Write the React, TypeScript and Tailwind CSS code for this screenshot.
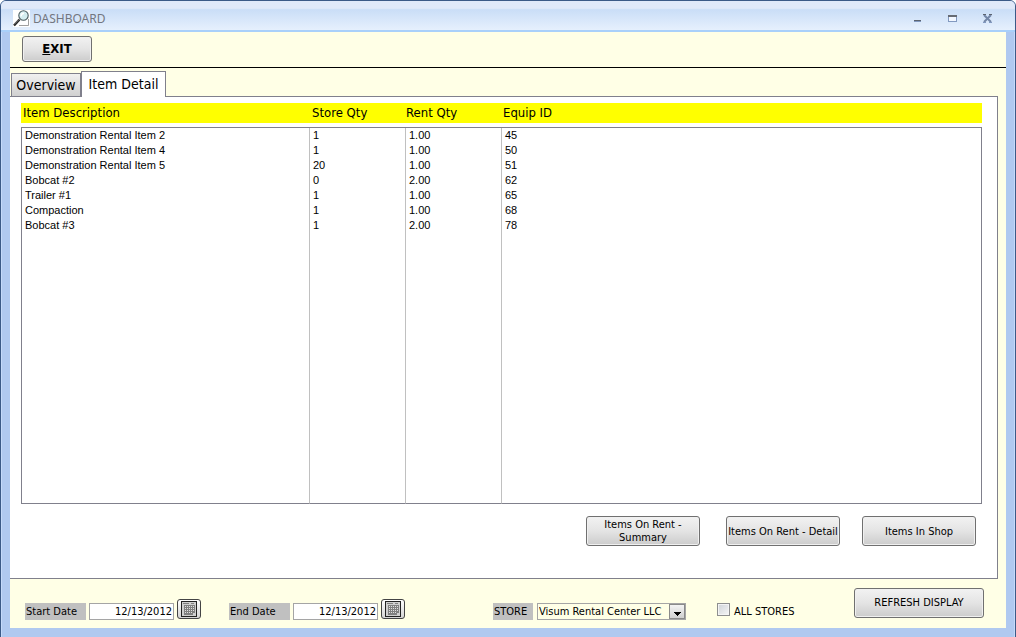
import { useState } from 'react';
import type { ReactNode } from 'react';
import clsx from 'clsx';

const items = [
  { description: 'Demonstration Rental Item 2', storeQty: 1, rentQty: '1.00', equipId: 45 },
  { description: 'Demonstration Rental Item 4', storeQty: 1, rentQty: '1.00', equipId: 50 },
  { description: 'Demonstration Rental Item 5', storeQty: 20, rentQty: '1.00', equipId: 51 },
  { description: 'Bobcat #2', storeQty: 0, rentQty: '2.00', equipId: 62 },
  { description: 'Trailer #1', storeQty: 1, rentQty: '1.00', equipId: 65 },
  { description: 'Compaction', storeQty: 1, rentQty: '1.00', equipId: 68 },
  { description: 'Bobcat #3', storeQty: 1, rentQty: '2.00', equipId: 78 },
];

function PushButton({ className, children }: { className?: string; children: ReactNode }) {
  return (
    <button
      type="button"
      className={clsx(
        'rounded-[3px] border border-[#707070] bg-linear-to-b from-[#f2f2f2] via-[#e4e4e4] via-50% to-[#cccccc] text-center shadow-[inset_0_0_0_1px_#f0f0f0]',
        className
      )}
    >
      {children}
    </button>
  );
}

function MagnifierIcon() {
  return (
    <svg width="17" height="17" viewBox="0 0 17 17" aria-hidden="true">
      <rect width="17" height="17" fill="#fff" />
      <path d="M15.5 9v6.5H6" fill="none" stroke="#888" strokeWidth="0.8" />
      <path d="M1 15.5 6.5 9.5" stroke="#222" strokeWidth="2.4" />
      <path d="M1 14.5 6 9.5" stroke="#aaa" strokeWidth="0.7" />
      <circle cx="10.5" cy="5.5" r="4.7" fill="#d5eef0" stroke="#4c5c60" strokeWidth="1.1" />
      <path d="M8 6.5c0-2 1.2-3.2 3-3.3" fill="none" stroke="#fff" strokeWidth="1.4" />
    </svg>
  );
}

function CalendarIcon() {
  return (
    <svg width="16" height="16" viewBox="0 0 16 16" shapeRendering="crispEdges" aria-hidden="true">
      <rect x="0.5" y="0.5" width="15" height="15" fill="#cfcfcf" stroke="#222" />
      <path d="M2 2.5h6M10 2.5h3" stroke="#808080" />
      <path d="M3 4h11v8h-2v2H3z" fill="#808080" />
      <path
        d="M4 5h1v1h-1zM6 5h1v1h-1zM8 5h1v1h-1zM10 5h1v1h-1zM12 5h1v1h-1zM4 7h1v1h-1zM6 7h1v1h-1zM8 7h1v1h-1zM10 7h1v1h-1zM12 7h1v1h-1zM4 9h1v1h-1zM6 9h1v1h-1zM8 9h1v1h-1zM10 9h1v1h-1zM12 9h1v1h-1zM4 11h1v1h-1zM6 11h1v1h-1zM8 11h1v1h-1zM10 11h1v1h-1z"
        fill="#e0e0e0"
      />
    </svg>
  );
}

function DateField({ id, label }: { id: string; label: string }) {
  const [value, setValue] = useState('12/13/2012');
  return (
    <div className="flex items-start gap-[3px]">
      <label htmlFor={id} className="mt-1 h-[17px] w-[61px] bg-[#c0c0c0] pl-px leading-[17px]">
        {label}
      </label>
      <input
        id={id}
        type="text"
        value={value}
        onChange={(e) => setValue(e.target.value)}
        className="mt-1 h-[17px] w-[85px] border border-[#a5a5a5] bg-white pr-px text-right"
      />
      <button
        type="button"
        aria-label={`Pick ${label}`}
        className="flex h-5 w-6 items-center justify-center rounded-[3px] border border-[#444] bg-linear-to-b from-white to-[#d4d4d4]"
      >
        <CalendarIcon />
      </button>
    </div>
  );
}

function TitleBar() {
  return (
    <header className="flex h-[31px] shrink-0 items-center border-b-2 border-[#a9d0fa] bg-linear-to-b from-[#e0e9f9] from-25% via-[#cadef7] via-30% to-[#e6f0fd] pt-1.5 pr-[22px] pl-3">
      <MagnifierIcon />
      <h1 className="ml-[3px] flex-1 font-['Noto_Sans',sans-serif] text-xs text-[#737780]">DASHBOARD</h1>
      <div className="flex items-center gap-6">
        <button type="button" aria-label="Minimize">
          <svg width="11" height="11" viewBox="0 0 11 11" shapeRendering="crispEdges">
            <path d="M2 7h7v1H2z" fill="#5c6470" />
            <path d="M2 8h7v1H2z" fill="#8299c0" />
          </svg>
        </button>
        <button type="button" aria-label="Maximize">
          <svg width="11" height="11" viewBox="0 0 11 11" shapeRendering="crispEdges">
            <path d="M1.5 2.5h8v6h-8z" fill="#f2f7ff" stroke="#8299c0" />
            <path d="M1 2h9v2H1z" fill="#666b74" />
          </svg>
        </button>
        <button type="button" aria-label="Close">
          <svg width="11" height="11" viewBox="0 0 11 11">
            <path d="M2 2l7 7M9 2L2 9" stroke="#7487a8" strokeWidth="2" />
            <path d="M1 1.5h3M7 1.5h3" stroke="#5c6470" />
            <path d="M1 9.5h3M7 9.5h3" stroke="#8299c0" />
          </svg>
        </button>
      </div>
    </header>
  );
}

function ItemTable() {
  return (
    <table className="w-full table-fixed border-separate border-spacing-0 text-left">
      <colgroup>
        <col className="w-72" />
        <col className="w-24" />
        <col className="w-24" />
        <col />
      </colgroup>
      <thead>
        <tr className="h-5 bg-[#ffff00] text-[13px] leading-5">
          <th className="p-0 pl-0.5 font-normal">Item Description</th>
          <th className="p-0 pl-[3px] font-normal">Store Qty</th>
          <th className="p-0 pl-px font-normal">Rent Qty</th>
          <th className="p-0 pl-0.5 font-normal">Equip ID</th>
        </tr>
        <tr>
          <td colSpan={4} className="h-[5px] border-b border-[#80808c] p-0" />
        </tr>
      </thead>
      <tbody className="font-['Liberation_Sans',Arial,sans-serif] text-[11px] leading-[15px]">
        {items.map((item) => (
          <tr key={item.equipId}>
            <td className="border-l border-[#80808c] p-0 pl-[3px]">{item.description}</td>
            <td className="border-l border-[#c0c0c0] p-0 pl-[3px]">{item.storeQty}</td>
            <td className="border-l border-[#c0c0c0] p-0 pl-[3px]">{item.rentQty}</td>
            <td className="border-r border-l border-r-[#80808c] border-l-[#c0c0c0] p-0 pl-[3px]">{item.equipId}</td>
          </tr>
        ))}
        {/* empty part of the list */}
        <tr className="h-[271px]">
          <td className="border-b border-l border-[#80808c] p-0" />
          <td className="border-b border-l border-b-[#80808c] border-l-[#c0c0c0] p-0" />
          <td className="border-b border-l border-b-[#80808c] border-l-[#c0c0c0] p-0" />
          <td className="border-r border-b border-l border-[#80808c] border-l-[#c0c0c0] p-0" />
        </tr>
      </tbody>
    </table>
  );
}

export default function App() {
  const [allStores, setAllStores] = useState(false);

  return (
    <div className="bg-white font-['DejaVu_Sans_Condensed','DejaVu_Sans',sans-serif] text-[11px] text-black">
      <div className="flex min-h-screen flex-col overflow-hidden rounded-t-md border border-[#3b5a87] bg-[#b0c9f0] shadow-[inset_1px_0_0_#c5dafa,inset_-1px_0_0_#c5dafa]">
        <TitleBar />

        <main className="mx-[9px] mb-[9px] flex flex-1 flex-col bg-[#ffffe6]">
          {/* Toolbar */}
          <div className="flex border-b border-black px-3 pt-1 pb-[5px]">
            <PushButton className="h-[26px] w-[70px] text-[13px] font-bold">
              <span className="underline">E</span>XIT
            </PushButton>
          </div>

          {/* Tabs */}
          <div role="tablist" className="flex items-end pt-[3px] pl-px text-sm">
            <button
              type="button"
              role="tab"
              aria-selected="false"
              className="h-[23px] w-[70px] border border-b-0 border-[#80808c] bg-linear-to-b from-[#f0f0f0] to-[#d0d0d0]"
            >
              Overview
            </button>
            <button
              type="button"
              role="tab"
              aria-selected="true"
              className="z-10 -mb-px h-[26px] w-[85px] border border-b-0 border-[#80808c] bg-white pb-0.5"
            >
              Item Detail
            </button>
          </div>

          <section className="mr-2 flex flex-1 flex-col border border-l-0 border-[#80808c] bg-white pt-1.5">
            <div className="pr-[15px] pl-[11px]">
              <ItemTable />
            </div>
            <div className="flex justify-end pt-3 pr-[21px] pb-8 text-[11px] leading-[13px]">
              <PushButton className="mr-[26px] h-[30px] w-[114px] px-2">Items On Rent - Summary</PushButton>
              <PushButton className="mr-[22px] h-[30px] w-[114px] whitespace-nowrap">Items On Rent - Detail</PushButton>
              <PushButton className="h-[30px] w-[114px]">Items In Shop</PushButton>
            </div>
          </section>

          {/* Filters */}
          <footer className="flex items-start pt-[9px] pr-[22px] pb-2 pl-[15px]">
            <div className="flex gap-7 pt-[11px]">
              <DateField id="start-date" label="Start Date" />
              <DateField id="end-date" label="End Date" />
            </div>
            <div className="ml-[88px] flex items-center gap-1 pt-[15px]">
              <label htmlFor="store" className="h-[17px] w-10 bg-[#c0c0c0] pl-px leading-[17px]">
                STORE
              </label>
              <div className="relative flex">
                <select
                  id="store"
                  className="h-[17px] w-[149px] appearance-none border border-[#a5a5a5] bg-[#ffffe6] pl-px leading-[15px]"
                >
                  <option>Visum Rental Center LLC</option>
                </select>
                <span className="pointer-events-none absolute top-px right-px flex h-[15px] w-4 items-center justify-center border border-[#8a8a8a] bg-linear-to-b from-[#f4f4f4] to-[#cfcfcf]">
                  <svg width="7" height="4" viewBox="0 0 7 4" className="mt-1" shapeRendering="crispEdges">
                    <path d="M0 0h7L3.5 4z" fill="#000" />
                  </svg>
                </span>
              </div>
            </div>
            <label className="ml-[31px] flex items-start gap-1 pt-[15px] leading-[17px]">
              <input
                type="checkbox"
                checked={allStores}
                onChange={(e) => setAllStores(e.target.checked)}
                className="size-[13px] appearance-none border border-[#8e8f8f] bg-linear-to-br from-[#cfd3d8] to-[#f6f6f6] shadow-[inset_0_0_0_1px_#f4f4f4] checked:bg-[#4a6ea9]"
              />
              ALL STORES
            </label>
            <PushButton className="ml-auto h-[30px] w-[130px]">REFRESH DISPLAY</PushButton>
          </footer>
        </main>
      </div>
    </div>
  );
}
